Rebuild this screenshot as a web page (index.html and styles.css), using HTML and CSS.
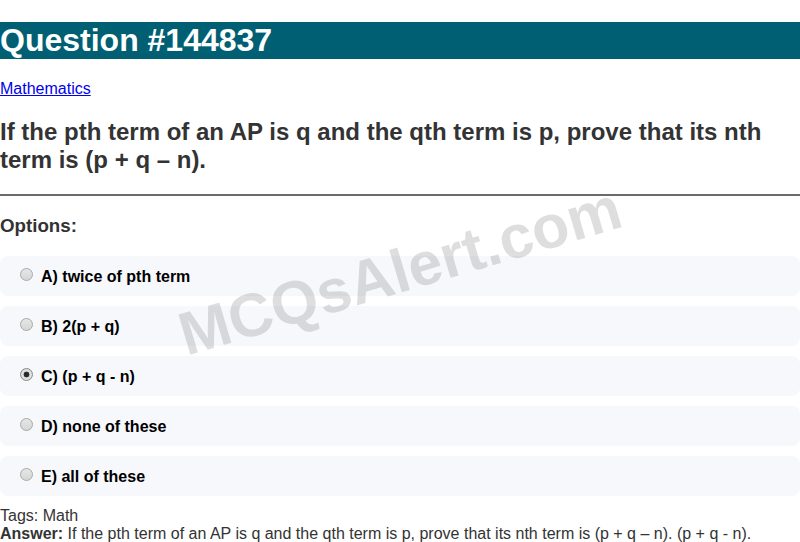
FILE: index.html
```html
<!DOCTYPE html>
<html>
<head>
<meta charset="utf-8">
<title>Question #144837</title>
<link rel="stylesheet" href="styles.css">
</head>
<body>
<h1 class="title">Question #144837</h1>
<p class="cat"><a href="#">Mathematics</a></p>
<h2 class="question">If the pth term of an AP is q and the qth term is p, prove that its nth term is (p + q – n).</h2>
<hr class="divider">
<h3 class="opt-head">Options:</h3>
<div class="options">
  <label class="option"><input type="radio" name="o" class="radio"> A) twice of pth term</label>
  <label class="option"><input type="radio" name="o" class="radio"> B) 2(p + q)</label>
  <label class="option"><input type="radio" name="o" class="radio" checked> C) (p + q - n)</label>
  <label class="option"><input type="radio" name="o" class="radio"> D) none of these</label>
  <label class="option"><input type="radio" name="o" class="radio"> E) all of these</label>
</div>
<div class="meta">Tags: Math</div>
<div class="meta"><b>Answer:</b> If the pth term of an AP is q and the qth term is p, prove that its nth term is (p + q – n). (p + q - n).</div>
<div class="watermark">MCQsAlert.com</div>
</body>
</html>
```
FILE: styles.css
```css
html, body {
  margin: 0;
  padding: 0;
}
body {
  font-family: "Liberation Sans", Arial, sans-serif;
  color: #333;
  background: #fff;
  position: relative;
  overflow: hidden;
}
.title {
  font-size: 32px;
  font-weight: bold;
  color: #fff;
  background: #015f73;
  margin: 22px 0 21.44px;
}
.cat {
  font-size: 16px;
  margin: 16px 0;
}
.cat a {
  color: #0000ee;
}
.question {
  font-size: 24px;
  font-weight: bold;
  color: #333;
  margin: 19.92px 0;
}
.divider {
  margin: 0;
  border: 0;
  border-top: 2px solid #6b6b6b;
  height: 0;
}
.opt-head {
  font-size: 18.72px;
  font-weight: bold;
  color: #333;
  margin: 18.72px 0;
}
.options {
  display: flex;
  flex-direction: column;
  gap: 10px;
  margin-bottom: 11px;
}
.option {
  display: flex;
  align-items: center;
  height: 40px;
  box-sizing: border-box;
  padding: 2px 15px 0;
  background: #f7f8fc;
  border-radius: 8px;
  font-size: 16px;
  font-weight: bold;
  color: #000;
}
.radio {
  appearance: none;
  -webkit-appearance: none;
  width: 13px;
  height: 13px;
  margin: 0 8px 0 5px;
  border: 1px solid #a8a8a8;
  border-radius: 50%;
  background: linear-gradient(#e6e6e6, #d6d6d6);
  box-sizing: border-box;
  position: relative;
  top: -2px;
  flex: none;
}
.radio:checked {
  background: radial-gradient(circle, #2a2a2a 0 2.6px, #dedede 3.2px);
  border-color: #8a8a8a;
}
.meta {
  font-size: 16px;
  line-height: 18px;
  color: #333;
}
.watermark {
  position: absolute;
  left: 400px;
  top: 271px;
  transform: translate(-50%, -50%) rotate(-16.5deg);
  font-size: 61px;
  font-weight: bold;
  color: rgba(0, 0, 0, 0.13);
  white-space: nowrap;
  pointer-events: none;
}
```
